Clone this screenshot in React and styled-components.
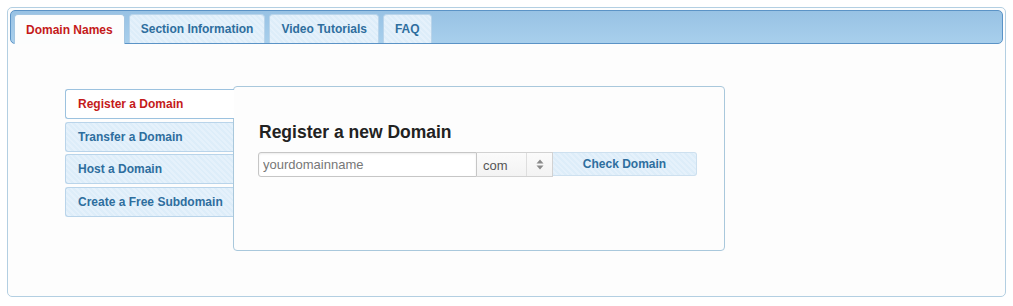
import React from "react";
import styled, { createGlobalStyle, css } from "styled-components";

const COLORS = {
  link: "#2e6e9e",
  active: "#c41a1a",
  tabBorder: "#b9d4ea",
  stripeA: "#ddedf9",
  stripeB: "#e5f1fb"
};

const stripes = css`
  background-color: ${COLORS.stripeA};
  background-image: repeating-linear-gradient(
    45deg,
    ${COLORS.stripeA} 0px,
    ${COLORS.stripeA} 2px,
    ${COLORS.stripeB} 2px,
    ${COLORS.stripeB} 4px
  );
`;

const GlobalStyle = createGlobalStyle`
  html, body {
    margin: 0;
    padding: 0;
    background: #ffffff;
    font-family: "Liberation Sans", Arial, sans-serif;
  }
  * {
    box-sizing: border-box;
  }
`;

const Widget = styled.div`
  margin: 7px 7px 0 7px;
  height: 290px;
  padding: 2px;
  border: 1px solid #b3cfe2;
  border-radius: 5px;
  background: #fdfdfd;
`;

const TabBar = styled.div`
  display: flex;
  align-items: flex-start;
  gap: 4px;
  height: 34px;
  padding: 3px 3px 0 3px;
  border: 1px solid #5b93c6;
  border-radius: 5px;
  background: linear-gradient(#98c2e4, #a8cfec);
`;

const Tab = styled.div`
  display: flex;
  align-items: center;
  height: 29px;
  padding: 0 11px;
  border: 1px solid ${COLORS.tabBorder};
  border-bottom: none;
  border-radius: 4px 4px 0 0;
  font-size: 12px;
  font-weight: 700;
  color: ${COLORS.link};
  ${stripes};
  ${props =>
    props.$active &&
    css`
      height: 30px;
      margin-bottom: -1px;
      position: relative;
      background: #fcfdfd;
      border-color: #a3c6e2;
      color: ${COLORS.active};
    `};
`;

const Body = styled.div`
  display: flex;
  align-items: flex-start;
  padding: 42px 0 0 55px;
`;

const SideNav = styled.div`
  display: flex;
  flex-direction: column;
  gap: 2.5px;
  width: 168px;
  margin-top: 3px;
`;

const NavItem = styled.div`
  display: flex;
  align-items: center;
  height: 30px;
  padding-left: 12px;
  border: 1px solid ${COLORS.tabBorder};
  border-right: none;
  border-radius: 3px 0 0 3px;
  font-size: 12px;
  font-weight: 700;
  color: ${COLORS.link};
  ${stripes};
  ${props =>
    props.$active &&
    css`
      position: relative;
      z-index: 1;
      margin-right: -1px;
      background: #ffffff;
      border-color: #9cc2df;
      color: ${COLORS.active};
    `};
`;

const Panel = styled.div`
  width: 492px;
  height: 165px;
  padding: 35px 24px 0 24px;
  border: 1px solid #a9c8dc;
  border-radius: 4px;
  background: #fdfdfd;
`;

const Heading = styled.h2`
  margin: 0 0 10px 1px;
  font-size: 17.5px;
  line-height: 20px;
  font-weight: 700;
  color: #222222;
`;

const FormRow = styled.div`
  display: flex;
  align-items: flex-start;
`;

const DomainInput = styled.input`
  width: 219px;
  height: 25px;
  padding: 0 4px;
  border: 1px solid #c6c6c6;
  border-radius: 3px 0 0 3px;
  box-shadow: inset 0 1px 2px rgba(0, 0, 0, 0.08);
  font-family: "Liberation Sans", Arial, sans-serif;
  font-size: 13px;
  color: #333;
  background: #ffffff;
  outline: none;
  &::placeholder {
    color: #777777;
  }
`;

const Select = styled.div`
  display: flex;
  align-items: stretch;
  width: 76px;
  height: 25px;
  border: 1px solid #d2d2d2;
  border-left: none;
  background: linear-gradient(#fbfbfb, #f3f3f3);
  font-size: 13px;
  color: #555555;
`;

const SelectValue = styled.span`
  flex: 1;
  display: flex;
  align-items: center;
  padding-left: 6px;
  padding-top: 2px;
`;

const SelectArrows = styled.span`
  width: 26px;
  display: flex;
  align-items: center;
  justify-content: center;
  border-left: 1px solid #dedede;
`;

const CheckButton = styled.button`
  width: 144px;
  height: 24px;
  border: 1px solid #cde0ef;
  border-left: none;
  border-radius: 0 3px 3px 0;
  font-family: "Liberation Sans", Arial, sans-serif;
  font-size: 12px;
  font-weight: 700;
  color: ${COLORS.link};
  cursor: pointer;
  ${stripes};
`;

const Arrows = () => (
  <svg width="8" height="11" viewBox="0 0 8 11">
    <path d="M4 0.5 L7.5 4.5 L0.5 4.5 Z" fill="#8a8a8a" />
    <path d="M4 10.5 L7.5 6.5 L0.5 6.5 Z" fill="#8a8a8a" />
  </svg>
);

const tabs = ["Domain Names", "Section Information", "Video Tutorials", "FAQ"];
const navItems = ["Register a Domain", "Transfer a Domain", "Host a Domain", "Create a Free Subdomain"];

const App = () => (
  <>
    <GlobalStyle />
    <Widget>
      <TabBar>
        {tabs.map((t, i) => (
          <Tab key={t} $active={i === 0}>
            {t}
          </Tab>
        ))}
      </TabBar>
      <Body>
        <SideNav>
          {navItems.map((n, i) => (
            <NavItem key={n} $active={i === 0}>
              {n}
            </NavItem>
          ))}
        </SideNav>
        <Panel>
          <Heading>Register a new Domain</Heading>
          <FormRow>
            <DomainInput placeholder="yourdomainname" />
            <Select>
              <SelectValue>com</SelectValue>
              <SelectArrows>
                <Arrows />
              </SelectArrows>
            </Select>
            <CheckButton>Check Domain</CheckButton>
          </FormRow>
        </Panel>
      </Body>
    </Widget>
  </>
);

export default App;
